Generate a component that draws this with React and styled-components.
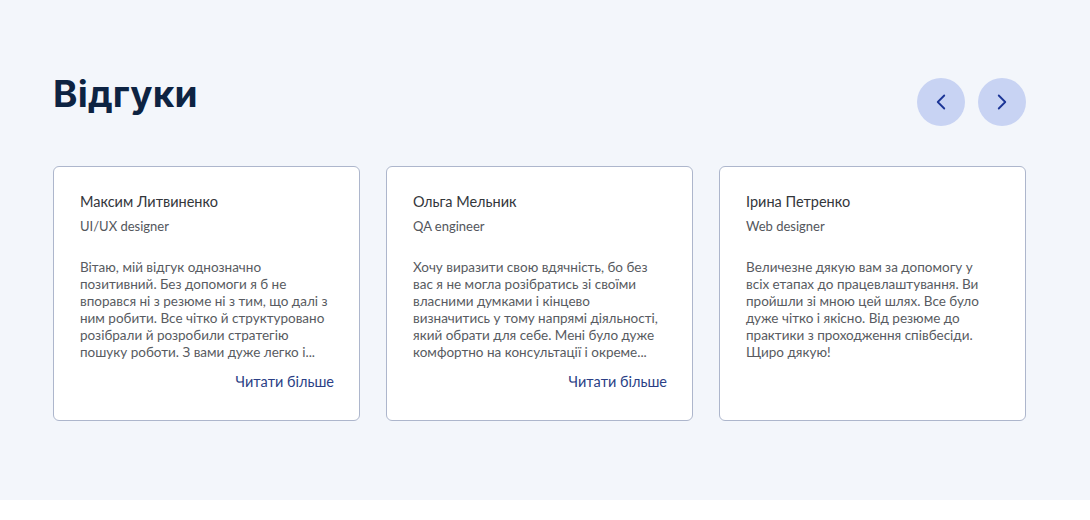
import React from "react";
import styled, { createGlobalStyle } from "styled-components";
import { ChevronLeft, ChevronRight } from "lucide-react";

const GlobalStyle = createGlobalStyle`
  body {
    margin: 0;
    background: #ffffff;
    font-family: "Lato", "Noto Sans", sans-serif;
  }
`;

const reviews = [
  {
    name: "Максим Литвиненко",
    role: "UI/UX designer",
    text: "Вітаю, мій відгук однозначно позитивний. Без допомоги я б не впорався ні з резюме ні з тим, що далі з ним робити. Все чітко й структуровано розібрали й розробили стратегію пошуку роботи. З вами дуже легко і...",
    more: true,
  },
  {
    name: "Ольга Мельник",
    role: "QA engineer",
    text: "Хочу виразити свою вдячність, бо без вас я не могла розібратись зі своїми власними думками і кінцево визначитись у тому напрямі діяльності, який обрати для себе. Мені було дуже комфортно на консультації і окреме...",
    more: true,
  },
  {
    name: "Ірина Петренко",
    role: "Web designer",
    text: "Величезне дякую вам за допомогу у всіх етапах до працевлаштування. Ви пройшли зі мною цей шлях. Все було дуже чітко і якісно. Від резюме до практики з проходження співбесіди. Щиро дякую!",
    more: false,
  },
];

const Section = styled.section`
  background: #f3f6fb;
  height: 500px;
  box-sizing: border-box;
  padding: 70px 0 0 53px;
`;

const Inner = styled.div`
  width: 973px;
`;

const Header = styled.div`
  display: flex;
  justify-content: space-between;
  align-items: flex-start;
  margin-bottom: 40px;
`;

const Title = styled.h2`
  margin: 0;
  padding-top: 1px;
  font-family: "Inter", "Roboto", sans-serif;
  font-size: 37px;
  font-weight: 700;
  line-height: 46px;
  color: #0d2342;
  letter-spacing: 0.2px;
`;

const Arrows = styled.div`
  display: flex;
  gap: 13px;
  padding-top: 8px;
`;

const ArrowButton = styled.button`
  width: 48px;
  height: 48px;
  border-radius: 50%;
  border: none;
  padding: 0;
  background: #c8d3f3;
  color: #1c3596;
  display: flex;
  align-items: center;
  justify-content: center;
  cursor: pointer;
`;

const Cards = styled.div`
  display: grid;
  grid-template-columns: repeat(3, 307px);
  gap: 26px;
`;

const Card = styled.article`
  box-sizing: border-box;
  height: 255px;
  background: #ffffff;
  border: 1px solid #adb6cc;
  border-radius: 6px;
  padding: 26px 25px 0 26px;
  display: flex;
  flex-direction: column;
`;

const Name = styled.div`
  font-size: 14.5px;
  line-height: 18px;
  color: #33363b;
`;

const Role = styled.div`
  margin-top: 6px;
  font-size: 13px;
  line-height: 18px;
  color: #53565c;
`;

const Text = styled.p`
  margin: 24px 0 0;
  max-width: 250px;
  font-size: 13.5px;
  line-height: 17px;
  color: #585b61;
`;

const More = styled.a`
  align-self: flex-end;
  margin-top: 12px;
  font-size: 14.5px;
  line-height: 18px;
  color: #2b3f86;
  text-decoration: none;
  cursor: pointer;
`;

export default function App() {
  return (
    <>
      <GlobalStyle />
      <Section>
        <Inner>
          <Header>
            <Title>Відгуки</Title>
            <Arrows>
              <ArrowButton aria-label="Попередній">
                <ChevronLeft size={26} strokeWidth={1.7} />
              </ArrowButton>
              <ArrowButton aria-label="Наступний">
                <ChevronRight size={26} strokeWidth={1.7} />
              </ArrowButton>
            </Arrows>
          </Header>
          <Cards>
            {reviews.map((r) => (
              <Card key={r.name}>
                <Name>{r.name}</Name>
                <Role>{r.role}</Role>
                <Text>{r.text}</Text>
                {r.more && <More>Читати більше</More>}
              </Card>
            ))}
          </Cards>
        </Inner>
      </Section>
    </>
  );
}
